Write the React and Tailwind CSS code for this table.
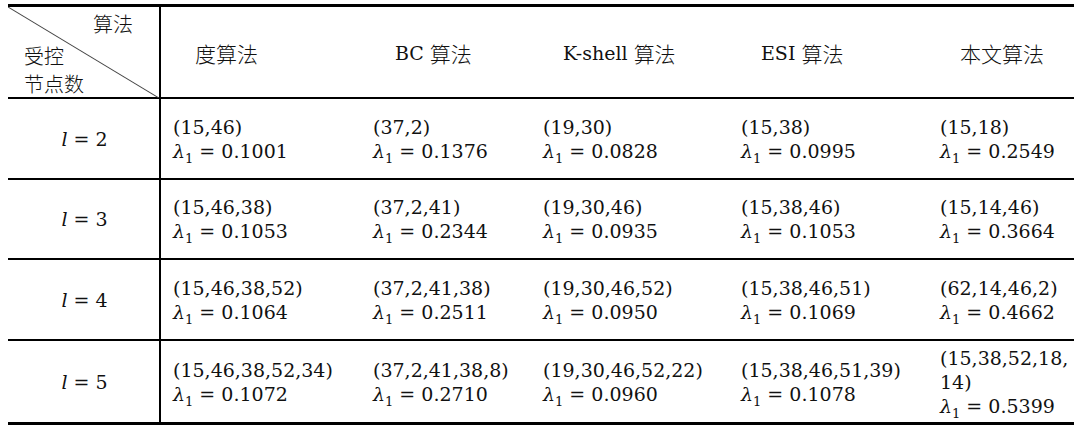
import React from 'react';

const COLS = 'grid grid-cols-[153px_200px_170px_198px_199px_146px]';
const CJK = { fontFamily: '"DejaVu Serif", "Noto Sans CJK SC", serif' };

const headers = [
  { latin: '', zh: '度算法' },
  { latin: 'BC', zh: '算法' },
  { latin: 'K-shell', zh: '算法' },
  { latin: 'ESI', zh: '算法' },
  { latin: '', zh: '本文算法' },
];

const rows = [
  {
    l: 2,
    h: 'h-[81px]',
    cells: [
      [['(15,46)'], '0.1001'],
      [['(37,2)'], '0.1376'],
      [['(19,30)'], '0.0828'],
      [['(15,38)'], '0.0995'],
      [['(15,18)'], '0.2549'],
    ],
  },
  {
    l: 3,
    h: 'h-[80px]',
    cells: [
      [['(15,46,38)'], '0.1053'],
      [['(37,2,41)'], '0.2344'],
      [['(19,30,46)'], '0.0935'],
      [['(15,38,46)'], '0.1053'],
      [['(15,14,46)'], '0.3664'],
    ],
  },
  {
    l: 4,
    h: 'h-[81px]',
    cells: [
      [['(15,46,38,52)'], '0.1064'],
      [['(37,2,41,38)'], '0.2511'],
      [['(19,30,46,52)'], '0.0950'],
      [['(15,38,46,51)'], '0.1069'],
      [['(62,14,46,2)'], '0.4662'],
    ],
  },
  {
    l: 5,
    h: 'h-[84px]',
    cells: [
      [['(15,46,38,52,34)'], '0.1072'],
      [['(37,2,41,38,8)'], '0.2710'],
      [['(19,30,46,52,22)'], '0.0960'],
      [['(15,38,46,51,39)'], '0.1078'],
      [['(15,38,52,18,', '14)'], '0.5399'],
    ],
  },
];

const Lambda = ({ value }) => (
  <div className="whitespace-nowrap">
    <span className="italic">λ</span>
    <span className="text-[13px] relative top-[5px]">1</span>
    <span> = {value}</span>
  </div>
);

const App = () => {
  return (
    <div className="w-[1080px] h-[432px] bg-white text-[#111] overflow-hidden" style={CJK}>
      <div className="ml-[8px] mt-[4px] w-[1066px] border-t-[3px] border-black">
        {/* header */}
        <div className={`${COLS} h-[92px] border-b-2 border-black`}>
          <div className="relative border-r-2 border-black text-[20px] leading-[28px] font-['Noto_Sans_CJK_SC',sans-serif] font-light">
            <svg className="absolute inset-0 w-full h-full" preserveAspectRatio="none" viewBox="0 0 100 100">
              <line x1="0" y1="0" x2="100" y2="100" stroke="#444" strokeWidth="1" vectorEffect="non-scaling-stroke" />
            </svg>
            <div className="flex flex-col pt-[3px] px-[16px]">
              <div className="text-right pr-[10px]">算法</div>
              <div className="mt-[4px]">受控</div>
              <div>节点数</div>
            </div>
          </div>
          {headers.map((h, i) => (
            <div key={i} className={`flex items-center gap-[6px] ${i < 2 ? 'pl-[34px]' : 'pl-[32px]'} pt-[2px] text-[19px]`}>
              {h.latin && <span>{h.latin}</span>}
              <span className="font-['Noto_Sans_CJK_SC',sans-serif] font-light text-[21px]">{h.zh}</span>
            </div>
          ))}
        </div>

        {/* body */}
        {rows.map((r, ri) => (
          <div key={r.l} className={`${COLS} ${r.h} ${ri === rows.length - 1 ? 'border-b-[3px]' : 'border-b-2'} border-black text-[19px] leading-[24px]`}>
            <div className="border-r-2 border-black flex items-center justify-center pl-[2px]">
              <span className="italic">l</span>
              <span>&nbsp;= {r.l}</span>
            </div>
            {r.cells.map(([lines, val], ci) => (
              <div key={ci} className="flex flex-col justify-center pl-[12px] pt-[3px]">
                {lines.map((t, k) => (
                  <div key={k} className="whitespace-nowrap">{t}</div>
                ))}
                <Lambda value={val} />
              </div>
            ))}
          </div>
        ))}
      </div>
    </div>
  );
};

export default App;
